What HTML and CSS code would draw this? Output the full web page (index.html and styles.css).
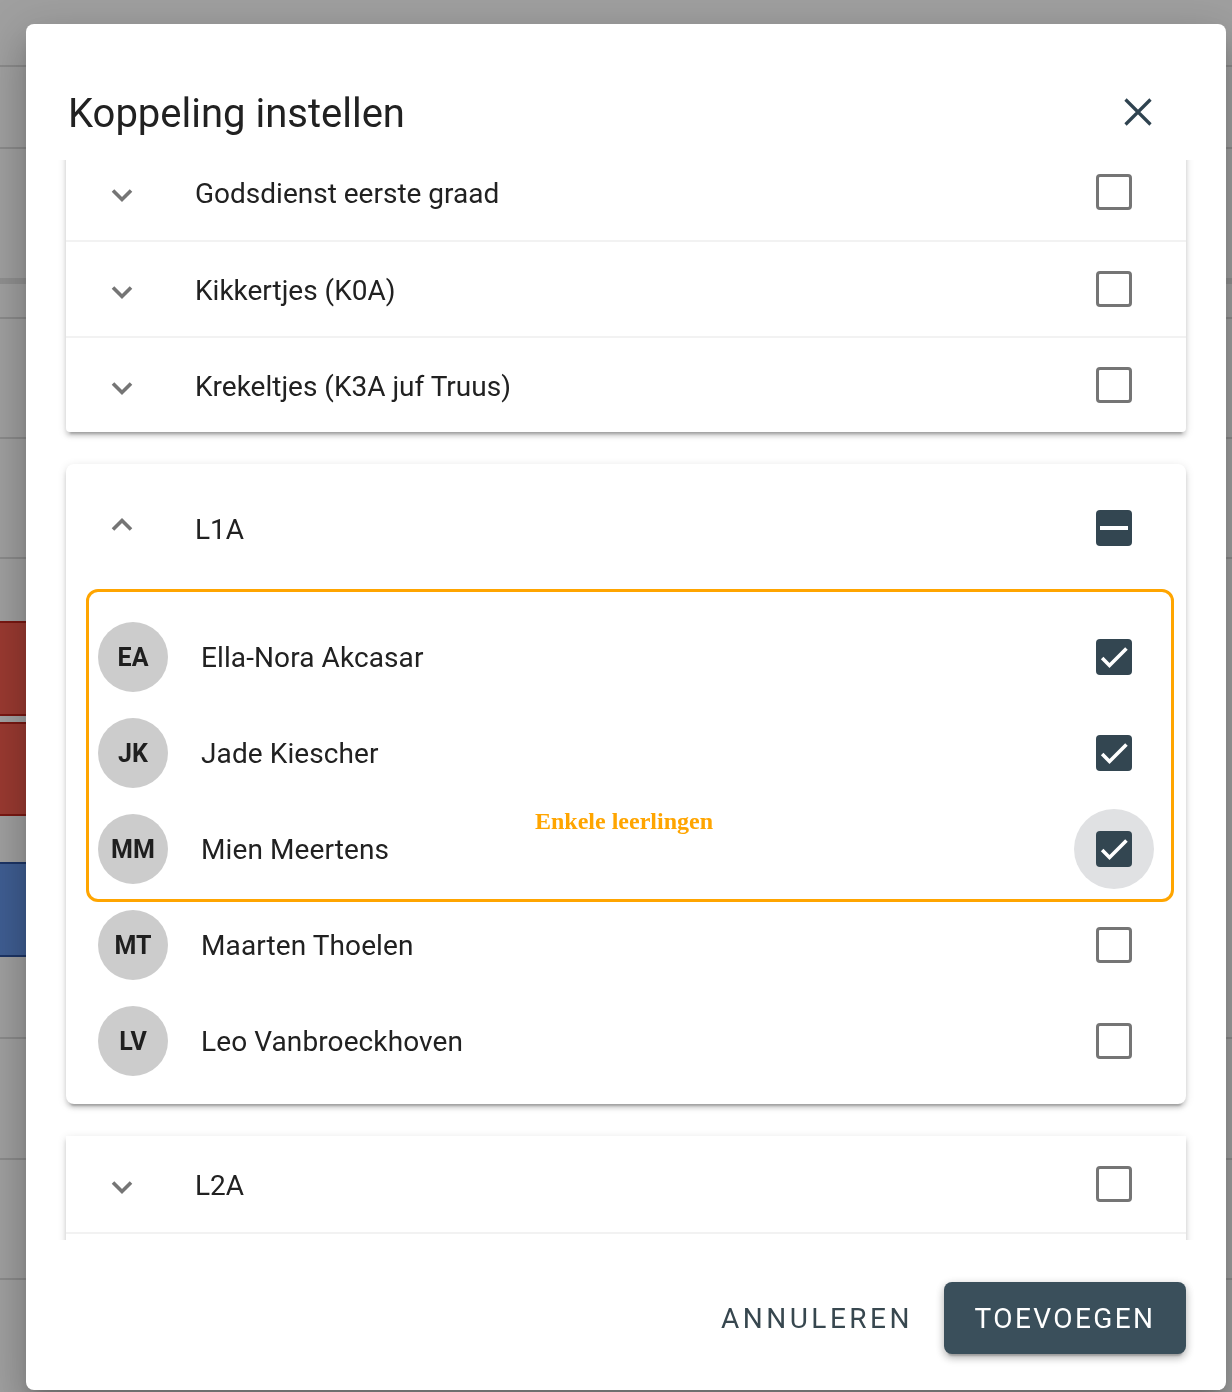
FILE: index.html
```html
<!DOCTYPE html>
<html lang="nl">
<head>
<meta charset="utf-8">
<title>Koppeling instellen</title>
<link rel="stylesheet" href="styles.css">
</head>
<body>
<div class="backdrop">
  <div></div><div class="ln"></div>
  <div></div><div class="ln"></div>
  <div></div><div class="band"></div>
  <div></div><div class="ln"></div>
  <div></div><div class="ln"></div>
  <div></div><div class="ln"></div>
  <div></div>
  <div class="ev red"></div>
  <div class="gap"></div>
  <div class="ev red"></div>
  <div></div>
  <div class="ev blue"></div>
  <div></div><div class="ln"></div>
  <div></div><div class="ln"></div>
  <div></div><div class="ln"></div>
  <div></div>
</div>

<div class="dialog" role="dialog">
  <header class="dlg-head">
    <h1 class="dlg-title">Koppeling instellen</h1>
    <button class="close" aria-label="Sluiten">
      <svg width="28" height="28" viewBox="0 0 28 28"><path d="M1.5 1.5 L26.5 26.5 M26.5 1.5 L1.5 26.5" stroke="#2f4350" stroke-width="3.2" fill="none"/></svg>
    </button>
  </header>

  <div class="dlg-body">
    <div class="scroll">
      <section class="group">
        <div class="row">
          <svg class="chev" viewBox="0 0 24 24"><polyline points="3,10.5 12,19.5 21,10.5"/></svg>
          <span class="label">Godsdienst eerste graad</span>
          <span class="cb-wrap"><span class="cb"></span></span>
        </div>
        <div class="row">
          <svg class="chev" viewBox="0 0 24 24"><polyline points="3,10.5 12,19.5 21,10.5"/></svg>
          <span class="label">Kikkertjes (K0A)</span>
          <span class="cb-wrap"><span class="cb"></span></span>
        </div>
        <div class="row">
          <svg class="chev" viewBox="0 0 24 24"><polyline points="3,10.5 12,19.5 21,10.5"/></svg>
          <span class="label">Krekeltjes (K3A juf Truus)</span>
          <span class="cb-wrap"><span class="cb"></span></span>
        </div>
      </section>

      <section class="panel">
        <div class="row head">
          <svg class="chev" viewBox="0 0 24 24"><polyline points="3,13.5 12,4.5 21,13.5"/></svg>
          <span class="label">L1A</span>
          <span class="cb-wrap"><span class="cb on"><svg viewBox="0 0 36 36"><rect x="4" y="16" width="28" height="4" fill="#fff" stroke="none"/></svg></span></span>
        </div>
        <div class="students">
          <div class="student">
            <span class="avatar">EA</span>
            <span class="name">Ella-Nora Akcasar</span>
            <span class="cb-wrap"><span class="cb on"><svg viewBox="0 0 24 24"><polyline points="4.1,12.7 9,17.6 20.3,6.3"/></svg></span></span>
          </div>
          <div class="student">
            <span class="avatar">JK</span>
            <span class="name">Jade Kiescher</span>
            <span class="cb-wrap"><span class="cb on"><svg viewBox="0 0 24 24"><polyline points="4.1,12.7 9,17.6 20.3,6.3"/></svg></span></span>
          </div>
          <div class="student">
            <span class="avatar">MM</span>
            <span class="name">Mien Meertens</span>
            <span class="cb-wrap focus"><span class="cb on"><svg viewBox="0 0 24 24"><polyline points="4.1,12.7 9,17.6 20.3,6.3"/></svg></span></span>
          </div>
          <div class="student">
            <span class="avatar">MT</span>
            <span class="name">Maarten Thoelen</span>
            <span class="cb-wrap"><span class="cb"></span></span>
          </div>
          <div class="student">
            <span class="avatar">LV</span>
            <span class="name">Leo Vanbroeckhoven</span>
            <span class="cb-wrap"><span class="cb"></span></span>
          </div>
        </div>
        <div class="highlight"><span class="note">Enkele leerlingen</span></div>
      </section>

      <section class="group">
        <div class="row">
          <svg class="chev" viewBox="0 0 24 24"><polyline points="3,10.5 12,19.5 21,10.5"/></svg>
          <span class="label">L2A</span>
          <span class="cb-wrap"><span class="cb"></span></span>
        </div>
        <div class="row"></div>
      </section>
    </div>
  </div>

  <footer class="dlg-foot">
    <button class="btn-text">ANNULEREN</button>
    <button class="btn-primary">TOEVOEGEN</button>
  </footer>
</div>
</body>
</html>
```

FILE: styles.css
```css
* { box-sizing: border-box; }

html, body {
  margin: 0;
  padding: 0;
  height: 100%;
}

body {
  background: #a0a0a0;
  font-family: Roboto, "Noto Sans", sans-serif;
  color: #212121;
  overflow: hidden;
}

/* ---------- underlying page (dimmed) ---------- */
.backdrop {
  height: 1392px;
  display: grid;
  grid-template-rows:
    65px 2px 80px 2px 129px 6px 33px 2px 118px 2px 118px 2px 62px
    95px 6px 94px 46px 95px 80px 2px 119px 2px 118px 2px 1fr;
}
.backdrop .ln { background: #8b8b8b; }
.backdrop .band { background: #909090; }
.backdrop .gap { width: 600px; background: #a3a3a3; }
.backdrop .ev { width: 600px; }
.backdrop .red {
  background: #9b3a31;
  border-top: 2px solid #7a1812;
  border-bottom: 2px solid #7a1812;
}
.backdrop .blue {
  background: #3f5e93;
  border-top: 2px solid #1d3566;
  border-bottom: 2px solid #1d3566;
}

/* ---------- dialog ---------- */
.dialog {
  position: fixed;
  top: 24px;
  left: 26px;
  width: 1200px;
  height: 1366px;
  background: #fff;
  border-radius: 8px;
  display: flex;
  flex-direction: column;
  overflow: hidden;
  box-shadow: 0 11px 15px -7px rgba(0,0,0,.2), 0 24px 38px 3px rgba(0,0,0,.14), 0 9px 46px 8px rgba(0,0,0,.12);
}

.dlg-head {
  height: 136px;
  flex: none;
  padding: 66px 74px 0 42px;
  display: flex;
  justify-content: space-between;
  align-items: flex-start;
}

.dlg-title {
  margin: 0;
  font-size: 40px;
  line-height: 48px;
  font-weight: 400;
  color: #212121;
  letter-spacing: 0;
}

.close {
  border: 0;
  background: none;
  padding: 0;
  margin-top: 8px;
  width: 28px;
  height: 28px;
  display: block;
}
.close svg { display: block; }

.dlg-body {
  flex: 1;
  min-height: 0;
  overflow: hidden;
  padding: 0 40px;
}

.scroll {
  margin-top: -16px;
}

/* ---------- panels ---------- */
.group {
  background: #fff;
  box-shadow: 0 6px 2px -4px rgba(0,0,0,.2), 0 4px 4px 0 rgba(0,0,0,.14), 0 2px 10px 0 rgba(0,0,0,.12);
  border-radius: 0 0 4px 4px;
}

.panel {
  position: relative;
  background: #fff;
  border-radius: 8px;
  margin: 32px 0;
  box-shadow: 0 6px 2px -4px rgba(0,0,0,.2), 0 4px 4px 0 rgba(0,0,0,.14), 0 2px 10px 0 rgba(0,0,0,.12);
}

.row {
  height: 96px;
  display: flex;
  align-items: center;
  padding: 0 54px 0 44px;
}
.group .row + .row {
  border-top: 2px solid #f2f2f2;
}
.row.head { height: 128px; }

.chev {
  width: 24px;
  height: 24px;
  flex: none;
  fill: none;
  stroke: #757575;
  stroke-width: 3.6;
  margin-right: 61px;
}

.label {
  flex: 1;
  font-size: 28px;
  line-height: 34px;
  padding-top: 4px;
  color: #212121;
}

/* ---------- checkboxes ---------- */
.cb-wrap {
  position: relative;
  width: 36px;
  height: 36px;
  flex: none;
}
.cb-wrap.focus::before {
  content: "";
  position: absolute;
  left: -22px;
  top: -22px;
  width: 80px;
  height: 80px;
  border-radius: 50%;
  background: #e0e1e3;
}
.cb {
  position: relative;
  display: block;
  width: 36px;
  height: 36px;
  border: 3px solid #757575;
  border-radius: 4px;
}
.cb.on {
  border: 0;
  background: #334651;
}
.cb svg {
  display: block;
  width: 36px;
  height: 36px;
  fill: none;
  stroke: #fff;
  stroke-width: 2.4;
}

/* ---------- students ---------- */
.students {
  padding: 17px 0 15px;
}
.student {
  height: 96px;
  display: flex;
  align-items: center;
  padding: 0 54px 0 32px;
}
.avatar {
  width: 70px;
  height: 70px;
  flex: none;
  border-radius: 50%;
  background: #cccccc;
  color: #1f1f1f;
  font-weight: 700;
  font-size: 25px;
  display: flex;
  align-items: center;
  justify-content: center;
  margin-right: 33px;
}
.name {
  flex: 1;
  font-size: 28px;
  letter-spacing: 0.1px;
  color: #212121;
}

/* ---------- annotation overlay ---------- */
.highlight {
  position: absolute;
  left: 20px;
  top: 125px;
  width: 1088px;
  height: 313px;
  border: 3px solid #ffa500;
  border-radius: 12px;
  pointer-events: none;
}
.note {
  position: absolute;
  left: 446px;
  top: 217px;
  font-family: "Liberation Serif", "Times New Roman", serif;
  font-weight: 700;
  font-size: 24px;
  line-height: 24px;
  color: #ffa500;
  white-space: nowrap;
}

/* ---------- footer ---------- */
.dlg-foot {
  flex: none;
  height: 150px;
  padding: 42px 40px 0;
  display: flex;
  justify-content: flex-end;
  align-items: flex-start;
  gap: 34px;
}
.btn-text {
  border: 0;
  background: none;
  padding: 0;
  height: 72px;
  font-family: Roboto, sans-serif;
  font-size: 28px;
  letter-spacing: 3.5px;
  color: #37474f;
  margin-right: -3px;
}
.btn-primary {
  border: 0;
  height: 72px;
  width: 242px;
  padding: 0;
  border-radius: 8px;
  background: #3a4f5b;
  color: #fff;
  font-family: Roboto, sans-serif;
  font-size: 28px;
  letter-spacing: 2.4px;
  box-shadow: 0 6px 2px -4px rgba(0,0,0,.2), 0 4px 8px 0 rgba(0,0,0,.22), 0 2px 10px 0 rgba(0,0,0,.12);
}
```
